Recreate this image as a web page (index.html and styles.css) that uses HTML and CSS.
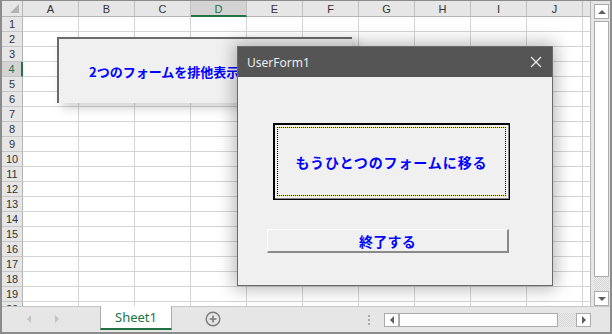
FILE: index.html
```html
<!DOCTYPE html>
<html lang="ja">
<head>
    <meta charset="UTF-8">
    <title>UserForm1</title>
    <link rel="stylesheet" href="styles.css">
</head>
<body>
<div class="excel">
    <div class="main">
        <div class="sheet">
            <div class="corner"></div>
            <div class="col-heads">
                <div class="ch">A</div>
                <div class="ch">B</div>
                <div class="ch">C</div>
                <div class="ch sel">D</div>
                <div class="ch">E</div>
                <div class="ch">F</div>
                <div class="ch">G</div>
                <div class="ch">H</div>
                <div class="ch">I</div>
                <div class="ch">J</div>
                <div class="ch"></div>
            </div>
            <div class="row-heads">
                <div class="rh">1</div>
                <div class="rh">2</div>
                <div class="rh">3</div>
                <div class="rh sel">4</div>
                <div class="rh">5</div>
                <div class="rh">6</div>
                <div class="rh">7</div>
                <div class="rh">8</div>
                <div class="rh">9</div>
                <div class="rh">10</div>
                <div class="rh">11</div>
                <div class="rh">12</div>
                <div class="rh">13</div>
                <div class="rh">14</div>
                <div class="rh">15</div>
                <div class="rh">16</div>
                <div class="rh">17</div>
                <div class="rh">18</div>
                <div class="rh">19</div>
                <div class="rh">20</div>
            </div>
            <div class="cells"></div>
        </div>
        <div class="vbar-wrap">
            <div class="vscroll">
                <div class="sb-btn"><span class="tri up"></span></div>
                <div class="sb-thumb v"></div>
                <div class="sb-track"></div>
                <div class="sb-btn"><span class="tri down"></span></div>
            </div>
        </div>
    </div>

    <div class="tabbar">
        <div class="nav">
            <span class="tri left light"></span>
            <span class="tri right light"></span>
        </div>
        <div class="tab">Sheet1</div>
        <div class="add">
            <svg width="16" height="16" viewBox="0 0 16 16">
                <circle cx="8" cy="8" r="6.8" fill="none" stroke="#7a7a7a" stroke-width="1.4"/>
                <path d="M8 4.5v7M4.5 8h7" stroke="#7a7a7a" stroke-width="1.6"/>
            </svg>
        </div>
        <div class="grip"><i></i><i></i><i></i></div>
        <div class="hscroll">
            <div class="sb-btn h"><span class="tri left"></span></div>
            <div class="sb-thumb h"></div>
            <div class="sb-track h"></div>
            <div class="sb-btn h"><span class="tri right"></span></div>
        </div>
    </div>

    <!-- フォーム(背面) -->
    <div class="back-form">
        <span class="back-label">2つのフォームを排他表示</span>
    </div>

    <!-- UserForm1 -->
    <div class="dialog">
        <div class="titlebar">
            <span class="title">UserForm1</span>
            <svg class="close" width="12" height="12" viewBox="0 0 12 12">
                <path d="M1 1L11 11M11 1L1 11" stroke="#ececec" stroke-width="1.3"/>
            </svg>
        </div>
        <div class="form-body">
            <div class="btn btn-default">
                <span class="focus-rect">もうひとつのフォームに移る</span>
            </div>
            <div class="btn btn-exit">終了する</div>
        </div>
    </div>
</div>
</body>
</html>
```

FILE: styles.css
```css
body {
    margin: 0;
    background-color: #e6e6e6;
    font-family: "Liberation Sans", Arial, sans-serif;
}
.excel {
    position: relative;
    width: 612px;
    height: 334px;
    box-sizing: border-box;
    border: 2px solid #8c8c8c;
    border-top-width: 1px;
    background-color: #e6e6e6;
    overflow: hidden;
}
.main {
    display: flex;
    height: 305px;
}
.sheet {
    display: grid;
    grid-template-columns: 21px 567px;
    grid-template-rows: 16px 289px;
    border-right: 1px solid #b8b8b8;
    background-color: #fff;
}
.corner {
    position: relative;
    box-sizing: border-box;
    border-right: 1px solid #b5b5b5;
    border-bottom: 1px solid #b5b5b5;
    background-color: #e6e6e6;
}
.corner::after {
    content: "";
    position: absolute;
    right: 3px;
    bottom: 3px;
    border-left: 9px solid transparent;
    border-bottom: 9px solid #b4b4b4;
}
.col-heads {
    display: flex;
    overflow: hidden;
    background-color: #e6e6e6;
}
.ch {
    flex: 0 0 56px;
    box-sizing: border-box;
    height: 16px;
    border-right: 1px solid #c0c0c0;
    border-bottom: 1px solid #b5b5b5;
    text-align: center;
    font-size: 11px;
    line-height: 16px;
    color: #333;
}
.ch.sel {
    background-color: #d3d3d3;
    border-bottom: 2px solid #217346;
    color: #217346;
}
.row-heads {
    overflow: hidden;
    background-color: #e6e6e6;
}
.rh {
    box-sizing: border-box;
    height: 15px;
    border-right: 1px solid #b5b5b5;
    border-bottom: 1px solid #c6c6c6;
    text-align: center;
    font-size: 11px;
    line-height: 14px;
    color: #333;
}
.rh.sel {
    background-color: #d3d3d3;
    border-right: 2px solid #217346;
    color: #217346;
}
.cells {
    background-color: #fff;
    background-image:
        linear-gradient(to right, transparent 55px, #d4d4d4 55px),
        linear-gradient(to bottom, transparent 14px, #d4d4d4 14px);
    background-size: 56px 15px;
}

/* scrollbars */
.vbar-wrap {
    width: 19px;
    padding: 3px 1px 0 3px;
    box-sizing: border-box;
}
.vscroll {
    display: flex;
    flex-direction: column;
    width: 15px;
    height: 302px;
}
.sb-btn {
    display: flex;
    align-items: center;
    justify-content: center;
    box-sizing: border-box;
    height: 15px;
    background-color: #fff;
    border: 1px solid #ababab;
}
.sb-btn.h {
    width: 15px;
    height: 14px;
}
.sb-thumb {
    box-sizing: border-box;
    background-color: #fff;
    border: 1px solid #ababab;
}
.sb-thumb.v {
    height: 256px;
    margin-top: 2px;
}
.sb-thumb.h {
    width: 159px;
}
.sb-track {
    flex: 1;
    background: repeating-conic-gradient(#d6d6d6 0 25%, #ececec 0 50%) 0 0 / 2px 2px;
}
.sb-track.h {
    flex: 0 0 18px;
}
.tri {
    width: 0;
    height: 0;
}
.tri.up {
    border-left: 4px solid transparent;
    border-right: 4px solid transparent;
    border-bottom: 4px solid #5f5f5f;
}
.tri.down {
    border-left: 4px solid transparent;
    border-right: 4px solid transparent;
    border-top: 4px solid #5f5f5f;
}
.tri.left {
    border-top: 4px solid transparent;
    border-bottom: 4px solid transparent;
    border-right: 4px solid #5f5f5f;
}
.tri.right {
    border-top: 4px solid transparent;
    border-bottom: 4px solid transparent;
    border-left: 4px solid #5f5f5f;
}
.tri.left.light {
    border-right-color: #c4c4c4;
}
.tri.right.light {
    border-left-color: #c4c4c4;
}

/* sheet tabs */
.tabbar {
    display: flex;
    align-items: flex-start;
    height: 26px;
    box-sizing: border-box;
    border-top: 1px solid #c6c6c6;
}
.nav {
    display: flex;
    align-items: center;
    gap: 24px;
    width: 98px;
    height: 24px;
    padding-left: 25px;
    box-sizing: border-box;
}
.tab {
    box-sizing: border-box;
    width: 72px;
    height: 24px;
    margin-top: -1px;
    border-left: 1px solid #ababab;
    border-right: 1px solid #ababab;
    border-bottom: 2px solid #217346;
    background-color: #fff;
    color: #217346;
    font-family: "Noto Sans", sans-serif;
    font-size: 13px;
    line-height: 22px;
    text-align: center;
}
.add {
    margin: 4px 0 0 33px;
    height: 16px;
}
.grip {
    display: flex;
    flex-direction: column;
    gap: 2px;
    margin: 8px 0 0 147px;
}
.grip i {
    width: 2px;
    height: 2px;
    background-color: #a8a8a8;
}
.hscroll {
    display: flex;
    margin: 6px 0 0 14px;
    width: 207px;
    height: 14px;
}

/* shape behind the dialog */
.back-form {
    position: absolute;
    left: 55px;
    top: 36px;
    width: 295px;
    height: 66px;
    box-sizing: border-box;
    display: flex;
    align-items: center;
    padding-left: 30px;
    border-top: 2px solid #6b6b6b;
    border-left: 2px solid #6b6b6b;
    background-color: #f0f0f0;
    box-shadow: 5px 5px 10px rgba(0, 0, 0, 0.18);
}
.back-label {
    color: #0000ff;
    font-family: "Noto Sans CJK JP", sans-serif;
    font-weight: bold;
    font-size: 13px;
    white-space: nowrap;
}

/* UserForm1 */
.dialog {
    position: absolute;
    left: 235px;
    top: 45px;
    width: 316px;
    height: 240px;
    box-sizing: border-box;
    border: 1px solid #6a6a6a;
    background-color: #f0f0f0;
    box-shadow: 0 0 16px 3px rgba(0, 0, 0, 0.28);
}
.titlebar {
    display: flex;
    align-items: center;
    justify-content: space-between;
    height: 30px;
    padding: 0 10px 0 9px;
    background-color: #555;
}
.title {
    color: #ececec;
    font-family: "Noto Sans", sans-serif;
    font-size: 12px;
}
.form-body {
    display: flex;
    flex-direction: column;
    align-items: flex-start;
    padding-top: 46px;
}
.btn {
    display: flex;
    align-items: center;
    justify-content: center;
    box-sizing: border-box;
    background-color: #f0f0f0;
    color: #0000ff;
    font-family: "Noto Sans CJK JP", sans-serif;
    font-weight: bold;
    font-size: 14px;
}
.btn-default {
    width: 237px;
    height: 77px;
    margin-left: 35px;
    padding: 3px;
    border: 1px solid #000;
    box-shadow: inset 1px 1px 0 #000, inset -1px -1px 0 #8a8a8a;
}
.focus-rect {
    display: flex;
    align-items: center;
    justify-content: center;
    width: 100%;
    height: 100%;
    box-sizing: border-box;
    border: 1px dotted #000;
    background: linear-gradient(#f0f0f0, #f0f0f0) padding-box, linear-gradient(#ffff00, #ffff00) border-box;
    letter-spacing: 0.9px;
}
.btn-exit {
    width: 242px;
    height: 24px;
    margin: 29px 0 0 29px;
    border-top: 1px solid #fff;
    border-left: 1px solid #fff;
    border-right: 2px solid #8a8a8a;
    border-bottom: 2px solid #8a8a8a;
    letter-spacing: 0.3px;
}
```
